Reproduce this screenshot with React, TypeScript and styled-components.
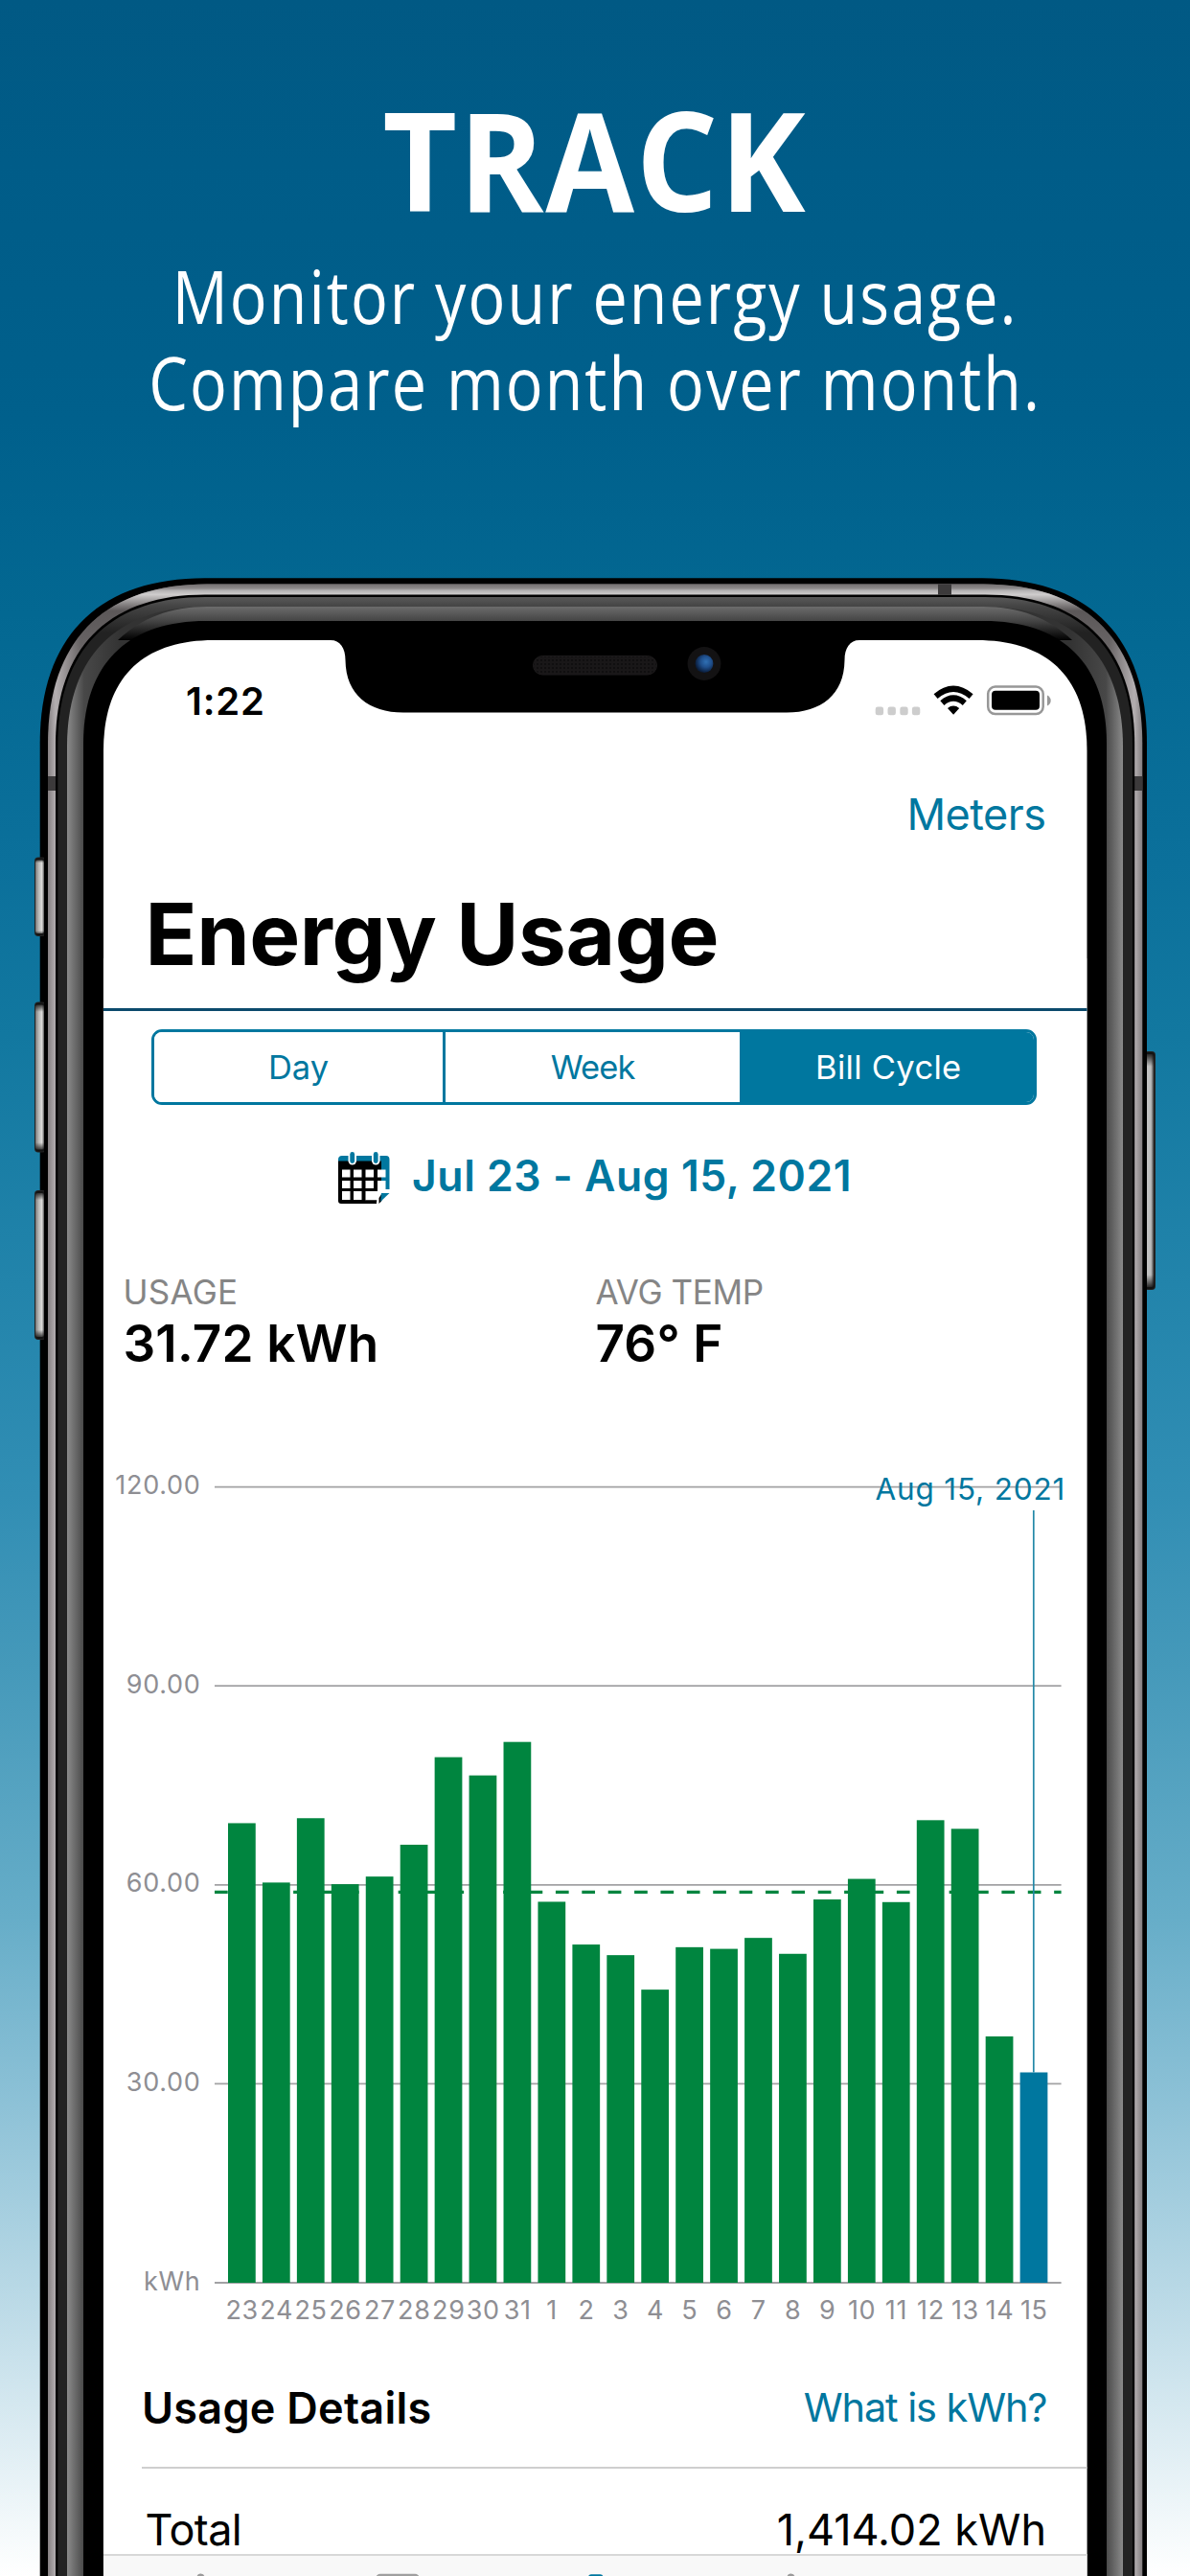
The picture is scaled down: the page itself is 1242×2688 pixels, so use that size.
import React from "react";
import styled, { createGlobalStyle } from "styled-components";

const blue = "#00779f";
const green = "#00853f";
const gray = "#8e8e93";
const sans = `Inter, "Liberation Sans", sans-serif`;

const GlobalStyle = createGlobalStyle`
  * { box-sizing: border-box; }
  body { margin: 0; font-family: ${sans}; }
`;

const Page = styled.main`
  position: relative;
  display: flex;
  flex-direction: column;
  width: 1242px;
  height: 2688px;
  overflow: hidden;
  background: linear-gradient(
    180deg,
    #015984 0,
    #005c88 170px,
    #00608c 440px,
    #036892 640px,
    #0b709b 900px,
    #1278a0 1080px,
    #2284ab 1340px,
    #318eb4 1560px,
    #4599ba 1740px,
    #66adc8 2000px,
    #8ec2d7 2200px,
    #bfdce8 2420px,
    #f4f9fb 2640px,
    #ffffff 2688px
  );
`;

const Hero = styled.header`
  display: flex;
  flex-direction: column;
  align-items: center;
  flex: none;
  height: 603px;
  padding-top: 86px;
  color: #fff;
  font-family: "Open Sans", "Noto Sans", sans-serif;
  text-align: center;
  white-space: nowrap;
`;

const HeroTitle = styled.h1`
  margin: 0;
  font-size: 143px;
  font-weight: 700;
  line-height: 160px;
  letter-spacing: 1.9px;
  transform: scaleX(0.94);
`;

const HeroText = styled.p`
  margin: 17.5px 0 0;
  font-size: 76px;
  font-weight: 400;
  line-height: 90px;
  letter-spacing: 2.42px;
  transform: scaleX(0.85);
`;

const Device = styled.section`
  position: relative;
  flex: none;
  height: 2085px;
  padding: 65px 107.5px 0 108px;
`;

const Bezel = styled.svg`
  position: absolute;
  inset: 0;
  width: 1242px;
  height: 2085px;
`;

const Screen = styled.div`
  position: relative;
  display: flex;
  flex-direction: column;
  width: 1026.5px;
  height: 2020px;
  background: #fff;
  color: #000;
  clip-path: path("M0 115 C0 40 40 0 115 0 H911.5 C986.5 0 1026.5 40 1026.5 115 V2020 H0 Z");
`;

const NotchArt = styled.svg`
  position: absolute;
  top: 0;
  left: 232px;
  width: 561px;
  height: 76px;
`;

const StatusBar = styled.div`
  display: flex;
  align-items: center;
  justify-content: space-between;
  flex: none;
  height: 126px;
  padding: 0 38px 0 86px;
`;

const Clock = styled.time`
  font-size: 40px;
  font-weight: 600;
  letter-spacing: 0.8px;
`;

const StatusIcons = styled.svg`
  width: 184px;
  height: 34px;
`;

const NavBar = styled.nav`
  display: flex;
  align-items: center;
  justify-content: flex-end;
  flex: none;
  height: 111px;
  padding-right: 43px;
`;

const LinkText = styled.a<{ $size: number; $track: number }>`
  color: ${blue};
  font-size: ${(p) => p.$size}px;
  letter-spacing: ${(p) => p.$track}px;
  white-space: nowrap;
`;

const TitleBar = styled.div`
  flex: none;
  height: 150px;
  padding-left: 43.5px;
  border-bottom: 3px solid #0b4a6c;
`;

const Title = styled.h2`
  margin: 0;
  font-size: 89px;
  font-weight: 700;
  line-height: 140.4px;
  letter-spacing: -0.39px;
`;

const Segments = styled.div`
  display: grid;
  grid-template-columns: 300.5px 310.7px 1fr;
  flex: none;
  height: 79.5px;
  margin: 18.7px 52.5px 0 50.3px;
  border: 3px solid ${blue};
  border-radius: 11px;
  overflow: hidden;
`;

const Segment = styled.button<{ $active?: boolean; $track: number }>`
  display: flex;
  align-items: center;
  justify-content: center;
  padding: 0;
  border: 0;
  border-left: 3px solid ${blue};
  background: ${(p) => (p.$active ? blue : "#fff")};
  color: ${(p) => (p.$active ? "#fff" : blue)};
  font: 400 34.5px ${sans};
  letter-spacing: ${(p) => p.$track}px;

  &:first-child { border-left: 0; }
`;

const DateRow = styled.div`
  display: flex;
  align-items: center;
  flex: none;
  gap: 22px;
  height: 147px;
  padding-left: 244px;
  color: ${blue};
  font-size: 44.5px;
  font-weight: 600;
  letter-spacing: 0.55px;
`;

const CalendarArt = styled.svg`
  width: 56px;
  height: 56px;
  margin-top: 4px;
`;

const Stats = styled.dl`
  display: grid;
  grid-template-columns: 493px 1fr;
  flex: none;
  margin: 0;
  padding: 28px 0 0 20.5px;
`;

const Stat = styled.div`
  display: flex;
  flex-direction: column;
  gap: 4px;
`;

const StatLabel = styled.dt<{ $track: number }>`
  color: #858585;
  font-size: 35px;
  line-height: 40px;
  letter-spacing: ${(p) => p.$track}px;
`;

const StatValue = styled.dd`
  margin: 0;
  font-size: 53px;
  font-weight: 600;
  line-height: 60px;
  letter-spacing: 0.15px;
`;

const ChartArt = styled.svg`
  flex: none;
  display: block;
  width: 1026.5px;
  height: 1018px;
  font-family: ${sans};
`;

const AxisText = styled.text`
  fill: ${gray};
  font-size: 27px;
  letter-spacing: 0.7px;
`;

const MarkerText = styled.text`
  fill: ${blue};
  font-size: 31.5px;
  letter-spacing: 0.83px;
`;

const Body = styled.div`
  display: flex;
  flex-direction: column;
  flex: none;
  height: 1997px;
  overflow: hidden;
`;

const DetailsHead = styled.div`
  display: flex;
  align-items: center;
  justify-content: space-between;
  flex: none;
  height: 126px;
  margin-left: 40px;
  padding-right: 42px;
  border-bottom: 2px solid #cfcfcf;
`;

const DetailsTitle = styled.h3`
  margin: 0;
  font-size: 45px;
  font-weight: 600;
  letter-spacing: 0.26px;
`;

const DetailRow = styled.div`
  display: flex;
  align-items: flex-end;
  justify-content: space-between;
  flex: none;
  height: 88.5px;
  padding: 0 42.5px 0 43.5px;
  font-size: 45px;
  line-height: 50px;
`;

const RowLabel = styled.span`
  letter-spacing: -0.6px;
`;

const TabBar = styled.footer`
  flex: none;
  height: 23px;
  border-top: 2px solid #d8d8d8;
  background: #f8f8f8;
`;

const TabArt = styled.svg`
  display: block;
  width: 1026px;
  height: 21px;
`;

const usage: [string, number][] = [
  ["23", 69.3], ["24", 60.35], ["25", 70.05], ["26", 60.1], ["27", 61.25], ["28", 66.05],
  ["29", 79.25], ["30", 76.5], ["31", 81.55], ["1", 57.45], ["2", 51], ["3", 49.4],
  ["4", 44.2], ["5", 50.6], ["6", 50.35], ["7", 52], ["8", 49.6], ["9", 57.8],
  ["10", 60.9], ["11", 57.4], ["12", 69.75], ["13", 68.45], ["14", 37.15], ["15", 31.72],
];

const ticks: [number, string][] = [[120, "120.00"], [90, "90.00"], [60, "60.00"], [30, "30.00"], [0, "kWh"]];

const base = 950;
const unit = 6.92;
const pitch = 35.94;
const firstBar = 130;
const yOf = (v: number) => base - v * unit;

function UsageChart() {
  return (
    <ChartArt viewBox="0 0 1026.5 1018">
      {ticks.map(([v, label]) => (
        <g key={v}>
          <line x1={116} x2={999.6} y1={yOf(v)} y2={yOf(v)} stroke="#a2a2a4" strokeWidth={1.8} />
          <AxisText x={101.5} y={yOf(v) + 7.6} textAnchor="end">{label}</AxisText>
        </g>
      ))}
      <line x1={116} x2={999.6} y1={542.3} y2={542.3} stroke={green} strokeWidth={3.2} strokeDasharray="13.7 13.68" />
      {usage.map(([day, v], i) => (
        <g key={day}>
          <rect
            x={firstBar + i * pitch}
            y={yOf(v)}
            width={28.75}
            height={v * unit}
            fill={i === usage.length - 1 ? blue : green}
          />
          <AxisText x={firstBar + i * pitch + 14.7} y={base + 37.7} textAnchor="middle">{day}</AxisText>
        </g>
      ))}
      <line x1={970.8} x2={970.8} y1={144} y2={yOf(31.72)} stroke="#2389a8" strokeWidth={1.7} />
      <MarkerText x={1004.1} y={132.5} textAnchor="end">Aug 15, 2021</MarkerText>
    </ChartArt>
  );
}

function Calendar() {
  return (
    <CalendarArt viewBox="0 0 56 56">
      <path d="M1 10 H46 V55 H4 Q1 55 1 52 Z" fill="#000" />
      <path d="M1 9 Q1 5 5 5 H51 Q54.500 5 54.500 9 V42 H46 V10.500 H1 Z" fill={blue} />
      <g fill="#fff">
        <path d="M5 19.500h8.500v8H5zM17 19.500h8.500v8H17zM29.500 19.500h8.500v8h-8.500zM42 19.500h8.500v8H42z" />
        <path d="M5 31h8.500v8H5zM17 31h8.500v8H17zM29.500 31h8.500v8h-8.500zM42 31h8.500v9H42z" />
        <path d="M5 42h8.500v9H5zM17 42h8.500v9H17zM29.500 42H42v-2h14v16H41v-4.500H29.500z" />
        <rect x="11.500" y="0" width="8.500" height="14.500" rx="4.200" />
        <rect x="36" y="0" width="8.500" height="14.500" rx="4.200" />
      </g>
      <path d="M29.500 51.500H41.500L40.500 55H29.500z" fill="#000" />
      <path d="M43.500 55V49l3-4.500V52z" fill="#000" />
      <path d="M46 44H54.500L45 53z" fill={blue} />
      <rect x="13.300" y="1" width="4.800" height="12" rx="2.400" fill={blue} />
      <rect x="37.800" y="1" width="4.800" height="12" rx="2.400" fill={blue} />
    </CalendarArt>
  );
}

function Status() {
  return (
    <StatusIcons viewBox="0 0 184 34">
      {[0, 12.8, 25.6, 38.2].map((x) => (
        <rect key={x} x={0.7 + x} y={23.500} width={8.4} height={8.800} rx={2.400} fill="#cdcdcd" />
      ))}
      <g fill="none" stroke="#000" strokeWidth="6.200">
        <path d="M63.600 12.600 Q82 -3 100.600 12.600" />
        <path d="M70.400 19.600 Q82 9.400 93.800 19.600" />
      </g>
      <path d="M76 25 Q82 20.200 88.200 25 L82.100 31.800 Z" fill="#000" />
      <rect x="118.200" y="2.600" width="57.500" height="28.400" rx="7.500" fill="none" stroke="#979797" strokeWidth="2.500" />
      <rect x="122" y="6.800" width="50" height="20" rx="4" fill="#000" />
      <path d="M180 11.500 Q183.700 13.500 183.700 17 Q183.700 20.500 180 22.500 Z" fill="#979797" />
    </StatusIcons>
  );
}

function Notch() {
  return (
    <NotchArt viewBox="340 668 561 76">
      <defs>
        <pattern id="mesh" width="4" height="4" patternUnits="userSpaceOnUse">
          <rect width="4" height="4" fill="#191718" />
          <rect width="2" height="2" fill="#100f10" />
        </pattern>
        <radialGradient id="lens" cx="0.6" cy="0.4" r="0.6">
          <stop offset="0" stopColor="#3070b4" />
          <stop offset="0.5" stopColor="#1f4f8c" />
          <stop offset="1" stopColor="#0a1d3c" />
        </radialGradient>
      </defs>
      <path
        d="M345 667 V668 C355 668 360.500 676 360.500 689 C361 725 385 743.500 421 743.500 H821 C857 743.500 881 725 881.500 689 C881.500 676 887 668 897 668 V667 Z"
        fill="#000"
      />
      <rect x="556.500" y="684.500" width="129" height="19.500" rx="9.700" fill="url(#mesh)" stroke="#1d1b1c" />
      <circle cx="735" cy="692.500" r="17.400" fill="#131213" />
      <circle cx="735" cy="692.500" r="9.400" fill="url(#lens)" />
    </NotchArt>
  );
}

/** Rounded-top outline of one layer of the phone body, open at the bottom edge. */
const shell = (l: number, t: number, r: number, e: number) => {
  const k = e * 0.355;
  return `M${l} 2700 V${t + e} C${l} ${t + k} ${l + k} ${t} ${l + e} ${t} H${r - e} C${r - k} ${t} ${r} ${t + k} ${r} ${t + e} V2700 Z`;
};

function SideButton({ x, y, h, id }: { x: number; y: number; h: number; id: string }) {
  return (
    <g>
      <rect x={x} y={y} width={12} height={h} rx={4} fill="#222" />
      <rect x={x + 1} y={y + 3} width={9} height={h - 6} rx={2} fill={`url(#${id})`} />
      <rect x={x + 1} y={y + 1} width={10} height={h - 2} rx={3} fill="url(#btnEnds)" />
    </g>
  );
}

function DeviceFrame() {
  return (
    <Bezel viewBox="0 603 1242 2085">
      <defs>
        <linearGradient id="railSide" gradientUnits="userSpaceOnUse" x1="50" x2="1192" y1="0" y2="0">
          <stop offset="0" stopColor="#858082" />
          <stop offset="0.007" stopColor="#b4afb1" />
          <stop offset="0.03" stopColor="#6a6667" />
          <stop offset="0.5" stopColor="#6a6667" />
          <stop offset="0.97" stopColor="#6a6667" />
          <stop offset="0.993" stopColor="#b4afb1" />
          <stop offset="1" stopColor="#858082" />
        </linearGradient>
        <linearGradient id="railTop" gradientUnits="userSpaceOnUse" x1="0" x2="0" y1="609" y2="680">
          <stop offset="0" stopColor="#6f6b6c" />
          <stop offset="0.07" stopColor="#8d898a" />
          <stop offset="0.1" stopColor="#b4b2b3" />
          <stop offset="0.16" stopColor="#cfcdcd" />
          <stop offset="0.4" stopColor="#5a5657" stopOpacity="0.9" />
          <stop offset="1" stopColor="#5a5657" stopOpacity="0" />
        </linearGradient>
        <linearGradient id="innerRail" gradientUnits="userSpaceOnUse" x1="0" x2="0" y1="623" y2="660">
          <stop offset="0" stopColor="#595959" />
          <stop offset="0.28" stopColor="#434343" />
          <stop offset="1" stopColor="#222" />
        </linearGradient>
        <linearGradient id="glassSide" gradientUnits="userSpaceOnUse" x1="70" x2="1172" y1="0" y2="0">
          <stop offset="0" stopColor="#8a8a8a" />
          <stop offset="0.016" stopColor="#484848" />
          <stop offset="0.05" stopColor="#333" />
          <stop offset="0.95" stopColor="#333" />
          <stop offset="0.984" stopColor="#484848" />
          <stop offset="1" stopColor="#8a8a8a" />
        </linearGradient>
        <linearGradient id="glassTop" gradientUnits="userSpaceOnUse" x1="0" x2="0" y1="633" y2="668">
          <stop offset="0" stopColor="#6c6c6c" />
          <stop offset="0.43" stopColor="#444" />
          <stop offset="1" stopColor="#000" />
        </linearGradient>
        <linearGradient id="btnLeft" x1="0" x2="1" y1="0" y2="0">
          <stop offset="0" stopColor="#777" />
          <stop offset="0.35" stopColor="#b5b5b4" />
          <stop offset="0.75" stopColor="#dddcda" />
          <stop offset="1" stopColor="#555" />
        </linearGradient>
        <linearGradient id="btnRight" x1="0" x2="1" y1="0" y2="0">
          <stop offset="0" stopColor="#8a8a8a" />
          <stop offset="0.3" stopColor="#c4c4c4" />
          <stop offset="0.7" stopColor="#bababa" />
          <stop offset="1" stopColor="#444" />
        </linearGradient>
        <linearGradient id="btnEnds" x1="0" x2="0" y1="0" y2="1">
          <stop offset="0" stopColor="#111" />
          <stop offset="0.06" stopColor="#111" stopOpacity="0" />
          <stop offset="0.94" stopColor="#111" stopOpacity="0" />
          <stop offset="1" stopColor="#111" />
        </linearGradient>
      </defs>
      <SideButton id="btnRight" x={1194} y={1097} h={249} />
      <path d={shell(41.7, 603.300, 1197, 172)} fill="#000" />
      <SideButton id="btnLeft" x={36} y={894.500} h={82.500} />
      <SideButton id="btnLeft" x={36} y={1045.500} h={157} />
      <SideButton id="btnLeft" x={36} y={1242} h={156} />
      <path d="M46 880H50V1410H46Z" fill="#000" />
      <path d={shell(50, 609.600, 1192.300, 166)} fill="url(#railSide)" />
      <path d={shell(50, 609.600, 1192.300, 166)} fill="url(#railTop)" />
      <path d="M50 810h8v15h-8zM1184 810h8.300v15h-8.300zM979 609.600h14v11h-14z" fill="#3c3a3b" />
      <path d={shell(58, 620.600, 1184.200, 156)} fill="#000" />
      <path d={shell(60.3, 623, 1182, 154)} fill="url(#innerRail)" />
      <path d={shell(70, 633, 1172, 146)} fill="url(#glassSide)" />
      <path d="M123 668 C147 645 178 633 216 633 H1026 C1064 633 1095 645 1119 668 Z" fill="url(#glassTop)" />
      <path d={shell(87, 648, 1155, 128)} fill="#000" />
      <path d="M108 1000V2690M1134.500 1000V2690" stroke="#333" strokeWidth="1" />
    </Bezel>
  );
}

export default function App() {
  return (
    <Page>
      <GlobalStyle />
      <Hero>
        <HeroTitle>TRACK</HeroTitle>
        <HeroText>
          Monitor your energy usage.
          <br />
          Compare month over month.
        </HeroText>
      </Hero>
      <Device>
        <DeviceFrame />
        <Screen>
          <Body>
            <StatusBar>
              <Clock>1:22</Clock>
              <Status />
            </StatusBar>
            <NavBar>
              <LinkText $size={45} $track={-0.5}>Meters</LinkText>
            </NavBar>
            <TitleBar>
              <Title>Energy Usage</Title>
            </TitleBar>
            <Segments>
              <Segment $track={0}>Day</Segment>
              <Segment $track={-0.9}>Week</Segment>
              <Segment $track={0.3} $active>Bill Cycle</Segment>
            </Segments>
            <DateRow>
              <Calendar />
              Jul 23 - Aug 15, 2021
            </DateRow>
            <Stats>
              <Stat>
                <StatLabel $track={0.23}>USAGE</StatLabel>
                <StatValue>31.72 kWh</StatValue>
              </Stat>
              <Stat>
                <StatLabel $track={-0.4}>AVG TEMP</StatLabel>
                <StatValue>76° F</StatValue>
              </Stat>
            </Stats>
            <UsageChart />
            <DetailsHead>
              <DetailsTitle>Usage Details</DetailsTitle>
              <LinkText $size={41.5} $track={-1.1}>What is kWh?</LinkText>
            </DetailsHead>
            <DetailRow>
              <RowLabel>Total</RowLabel>
              <span>1,414.02 kWh</span>
            </DetailRow>
          </Body>
          <TabBar>
            <TabArt viewBox="0 0 1026 21">
              <circle cx="101.500" cy="22.500" r="4" fill="#999" />
              <rect x="284" y="18.800" width="46" height="20" rx="5" fill="#9f9f9f" />
              <rect x="506" y="19.300" width="15.500" height="20" rx="3" fill={blue} />
              <circle cx="717.500" cy="22.500" r="4" fill="#999" />
            </TabArt>
          </TabBar>
          <Notch />
        </Screen>
      </Device>
    </Page>
  );
}
